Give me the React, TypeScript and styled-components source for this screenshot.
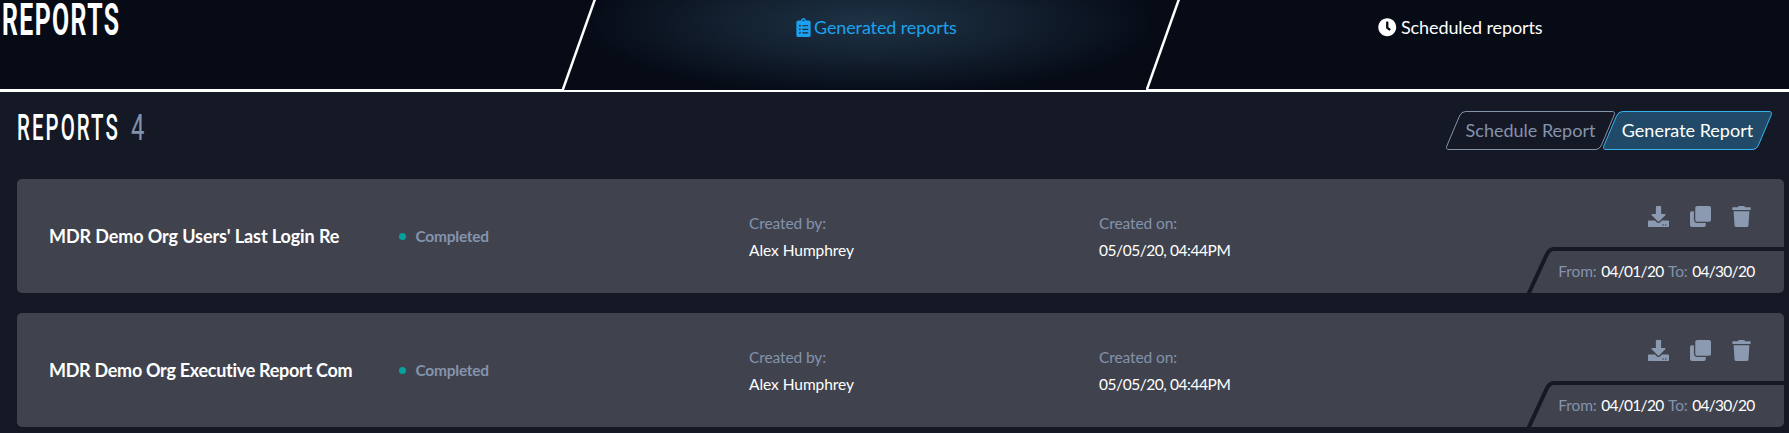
import React from "react";
import styled, { createGlobalStyle } from "styled-components";
import { FaClipboardList, FaClock, FaClone, FaDownload, FaTrash } from "react-icons/fa";

const Global = createGlobalStyle`
  * { box-sizing: border-box; }
  body {
    margin: 0;
    background: #151926;
    color: #fff;
    font-family: Lato, "Open Sans", sans-serif;
    overflow: hidden;
  }
`;

const Page = styled.div`
  height: 433px;
  overflow: hidden;
`;

const Header = styled.header`
  display: flex;
  height: 92px;
  background: #060b16;
  border-bottom: 2px solid #fff;
`;

const Condensed = styled.span<{ $size: number; $squeeze: number; $weight: number; $spacing?: number }>`
  display: block;
  width: max-content;
  font-family: Roboto, sans-serif;
  font-size: ${(p) => p.$size}px;
  font-weight: ${(p) => p.$weight};
  letter-spacing: ${(p) => p.$spacing ?? 0}px;
  line-height: 1;
  transform: scaleX(${(p) => p.$squeeze});
  transform-origin: left top;
`;

const Brand = styled.h1`
  margin: 0;
  width: 562px;
  padding: 0 0 0 2px;
  border-bottom: 1px solid #fff;
  span { line-height: 41px; }
`;

const Tab = styled.div<{ $active?: boolean; $width: number; $inset: number }>`
  position: relative;
  display: flex;
  align-items: flex-start;
  width: ${(p) => p.$width}px;
  padding: 18px 0 0 ${(p) => p.$inset}px;
  font-size: 18px;
  line-height: 20px;
  white-space: nowrap;
  color: ${(p) => (p.$active ? "#1ba1f0" : "#fff")};
  background: ${(p) =>
    p.$active
      ? "radial-gradient(ellipse 290px 74px at 308px 22px, #1d3345 0%, #13202f 50%, rgba(6, 11, 22, 0) 100%)"
      : "none"};
  border-bottom: ${(p) => (p.$active ? "none" : "1px solid #fff")};
  svg { flex: none; }
`;

const TabIcon = styled.span<{ $width: number }>`
  display: flex;
  justify-content: center;
  width: ${(p) => p.$width}px;
`;

const TabLabel = styled.span<{ $spacing: number }>`
  margin: -1px 0 0 4px;
  letter-spacing: ${(p) => p.$spacing}px;
`;

const Slant = styled.svg`
  position: absolute;
  left: 0;
  top: 0;
`;

const Toolbar = styled.div`
  display: flex;
  justify-content: space-between;
  height: 87px;
  padding: 19px 17px 0 17px;
`;

const Heading = styled.h2`
  display: flex;
  margin: -1px 0 0;
`;

const HeadingName = styled.div`
  width: 114px;
`;

const Count = styled.div`
  color: #8493ac;
`;

const Actions = styled.div`
  display: flex;
`;

const ActionButton = styled.button<{ $primary?: boolean }>`
  position: relative;
  width: 169px;
  height: 39px;
  margin: 0 0 0 ${(p) => (p.$primary ? -12 : 0)}px;
  padding: 0 0 1px;
  border: 0;
  background: none;
  color: ${(p) => (p.$primary ? "#fff" : "#8493ac")};
  font: inherit;
  font-size: 18px;
  white-space: nowrap;
  svg { position: absolute; left: 0; top: 0; }
`;

const ActionText = styled.span`
  position: relative;
`;

const List = styled.main`
  display: flex;
  flex-direction: column;
  gap: 20px;
  padding: 0 5px 0 17px;
`;

const Card = styled.article`
  display: grid;
  grid-template-columns: 350px 350px 350px 350px 1fr;
  height: 114px;
  padding-left: 32px;
  border-radius: 5px;
  background: #40434e;
  overflow: hidden;
`;

const Name = styled.div<{ $spacing: number }>`
  align-self: center;
  font-size: 18px;
  font-weight: 700;
  letter-spacing: ${(p) => p.$spacing}px;
  white-space: nowrap;
`;

const Status = styled.div`
  display: flex;
  align-items: center;
  gap: 9.5px;
  color: #8493ac;
  font-size: 15.5px;
  font-weight: 700;
  letter-spacing: -0.25px;
  &::before {
    content: "";
    width: 7px;
    height: 7px;
    border-radius: 50%;
    background: #05a19d;
  }
`;

const Field = styled.div`
  display: flex;
  flex-direction: column;
  padding-top: 31px;
  font-size: 15.5px;
  line-height: 27px;
`;

const Label = styled.span`
  color: #8493ac;
  letter-spacing: -0.1px;
`;

const Value = styled.span<{ $spacing: number }>`
  letter-spacing: ${(p) => p.$spacing}px;
`;

const Side = styled.div`
  display: flex;
  flex-direction: column;
`;

const IconRow = styled.div`
  display: flex;
  justify-content: flex-end;
  gap: 20.5px;
  height: 68px;
  padding: 27px 32px 0 0;
  color: #8b9ab0;
`;

const Period = styled.div`
  position: relative;
  display: flex;
  justify-content: flex-end;
  gap: 4.5px;
  height: 46px;
  padding: 14px 29.5px 0 0;
  font-size: 15.5px;
  line-height: 20px;
  white-space: nowrap;
  svg { position: absolute; right: 0; top: 0; }
`;

function Button({ label, primary }: { label: string; primary?: boolean }) {
  return (
    <ActionButton $primary={primary}>
      <svg width="169" height="39" fill={primary ? "#214a68" : "none"} stroke={primary ? "#36b4f0" : "#8493ac"}>
        <path d="M19.500 .5H166Q169.500 .5 168.200 4L155.500 34Q153.500 38.500 150 38.500H3Q-.5 38.500 .8 35L13.500 5Q15.500 .5 19.500 .5Z" />
      </svg>
      <ActionText>{label}</ActionText>
    </ActionButton>
  );
}

function Divider() {
  return (
    <Slant width="36" height="91">
      <path d="M.5 90.500L33 -1" stroke="#fff" strokeWidth="2.500" />
    </Slant>
  );
}

function Report({ name, spacing }: { name: string; spacing: number }) {
  return (
    <Card>
      <Name $spacing={spacing}>{name}</Name>
      <Status>Completed</Status>
      <Field>
        <Label>Created by:</Label>
        <Value $spacing={-0.05}>Alex Humphrey</Value>
      </Field>
      <Field>
        <Label>Created on:</Label>
        <Value $spacing={-0.45}>05/05/20, 04:44PM</Value>
      </Field>
      <Side>
        <IconRow>
          <FaDownload size={21} />
          <FaClone size={21} />
          <FaTrash size={21} />
        </IconRow>
        <Period>
          <svg width="260" height="46" fill="none" stroke="#151926" strokeWidth="4">
            <path d="M4 48L23 7Q25.500 2 30 2H260" />
          </svg>
          <Label>From:</Label>
          <Value $spacing={-0.7}>04/01/20</Value>
          <Label>To:</Label>
          <Value $spacing={-0.7}>04/30/20</Value>
        </Period>
      </Side>
    </Card>
  );
}

export default function App() {
  return (
    <Page>
      <Global />
      <Header>
        <Brand>
          <Condensed $size={43.5} $squeeze={0.57} $weight={700} $spacing={2.5}>REPORTS</Condensed>
        </Brand>
        <Tab $active $width={584} $inset={234}>
          <Divider />
          <TabIcon $width={14}><FaClipboardList size={19} /></TabIcon>
          <TabLabel $spacing={-0.12}>Generated reports</TabLabel>
        </Tab>
        <Tab $width={643} $inset={232}>
          <Divider />
          <TabIcon $width={19}><FaClock size={18.5} /></TabIcon>
          <TabLabel $spacing={-0.1}>Scheduled reports</TabLabel>
        </Tab>
      </Header>
      <Toolbar>
        <Heading>
          <HeadingName>
            <Condensed $size={36.5} $squeeze={0.56} $weight={500} $spacing={3.7}>REPORTS</Condensed>
          </HeadingName>
          <Count>
            <Condensed $size={36.5} $squeeze={0.65} $weight={400}>4</Condensed>
          </Count>
        </Heading>
        <Actions>
          <Button label="Schedule Report" />
          <Button label="Generate Report" primary />
        </Actions>
      </Toolbar>
      <List>
        <Report name="MDR Demo Org Users' Last Login Re" spacing={-0.1} />
        <Report name="MDR Demo Org Executive Report Com" spacing={-0.29} />
      </List>
    </Page>
  );
}
